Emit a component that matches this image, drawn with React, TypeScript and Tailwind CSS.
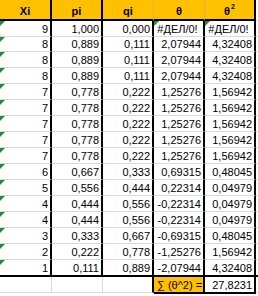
import React from 'react';

const ERR = '#ДЕЛ/0!';

const ROWS: string[][] = [
  ['9', '1,000', '0,000', ERR, ERR],
  ['8', '0,889', '0,111', '2,07944', '4,32408'],
  ['8', '0,889', '0,111', '2,07944', '4,32408'],
  ['8', '0,889', '0,111', '2,07944', '4,32408'],
  ['7', '0,778', '0,222', '1,25276', '1,56942'],
  ['7', '0,778', '0,222', '1,25276', '1,56942'],
  ['7', '0,778', '0,222', '1,25276', '1,56942'],
  ['7', '0,778', '0,222', '1,25276', '1,56942'],
  ['7', '0,778', '0,222', '1,25276', '1,56942'],
  ['6', '0,667', '0,333', '0,69315', '0,48045'],
  ['5', '0,556', '0,444', '0,22314', '0,04979'],
  ['4', '0,444', '0,556', '-0,22314', '0,04979'],
  ['4', '0,444', '0,556', '-0,22314', '0,04979'],
  ['3', '0,333', '0,667', '-0,69315', '0,48045'],
  ['2', '0,222', '0,778', '-1,25276', '1,56942'],
  ['1', '0,111', '0,889', '-2,07944', '4,32408'],
];

// row heights incl. the 1px gridline; the last one sits on the thick rule
const HEIGHTS = ['h-[16px]', 'h-[15px]', 'h-[16px]', 'h-[16px]', 'h-[16px]', 'h-[16px]', 'h-[16px]', 'h-[16px]', 'h-[16px]', 'h-[16px]', 'h-[16px]', 'h-[16px]', 'h-[16px]', 'h-[16px]', 'h-[16px]', 'h-[17px]'];

const WIDTHS = ['w-[52px]', 'w-[51px]', 'w-[51px]', 'w-[51px]', 'w-[51px]'];

const Flag = () => (
  <svg className="absolute left-0 top-0" width="5" height="5" viewBox="0 0 5 5">
    <polygon points="0,0 5,0 0,5" fill="#1e8a3a" />
  </svg>
);

export default function App() {
  return (
    <div className="w-[258px] h-[296px] overflow-hidden bg-white text-black text-[11px] font-['Liberation_Sans',Arial,sans-serif]">
      {/* header */}
      <div className="flex h-[21px]">
        {['Xi', 'pi', 'qi', 'θ', 'θ2'].map((h, i) => (
          <div
            key={h}
            className={`${WIDTHS[i]} h-full bg-[#ffc000] border-b-2 border-b-black flex items-end justify-center pb-[2px] font-bold leading-none ${
              i === 2 || i === 3 ? 'border-r border-r-[#d9b24a]' : 'border-r-2 border-r-black'
            }`}
          >
            {h === 'θ2' ? (
              <span className="flex items-start">
                θ<span className="text-[7px] leading-none relative -top-[3px] ml-[1px]">2</span>
              </span>
            ) : (
              h
            )}
          </div>
        ))}
        <div className="flex-1 h-full border-b border-b-[#d9d9d9]" />
      </div>

      {/* data */}
      {ROWS.map((row, r) => {
        const last = r === ROWS.length - 1;
        return (
          <div key={r} className={`flex ${HEIGHTS[r]}`}>
            {row.map((v, c) => (
              <div
                key={c}
                className={`${WIDTHS[c]} relative h-full border-r-2 border-r-black flex items-end pb-[1px] pr-[2px] leading-none ${
                  last ? 'border-b-2 border-b-black' : 'border-b border-b-[#d9d9d9]'
                } ${v === ERR ? 'justify-center' : 'justify-end'}`}
              >
                {(c === 0 || v === ERR) && <Flag />}
                {v}
              </div>
            ))}
            <div className={`flex-1 h-full ${last ? 'border-b-2 border-b-black' : 'border-b border-b-[#d9d9d9]'}`} />
          </div>
        );
      })}

      {/* total */}
      <div className="flex h-[17px]">
        <div className="w-[52px] h-[16px] border-r border-r-[#d9d9d9] border-b border-b-[#d9d9d9]" />
        <div className="w-[51px] h-[16px] border-r border-r-[#d9d9d9] border-b border-b-[#d9d9d9]" />
        <div className="w-[51px] h-[16px] border-r-2 border-r-black border-b border-b-[#d9d9d9]" />
        <div className="w-[51px] h-full bg-[#ffc000] border-r-2 border-r-black border-b-2 border-b-black flex items-end pb-[1px] pl-[3px] leading-none">
          ∑ (θ^2) =
        </div>
        <div className="w-[51px] h-full border-r-2 border-r-black border-b-2 border-b-black flex items-end justify-end pb-[1px] pr-[2px] leading-none">
          27,8231
        </div>
        <div className="flex-1 h-[16px] border-b border-b-[#d9d9d9]" />
      </div>
    </div>
  );
}
